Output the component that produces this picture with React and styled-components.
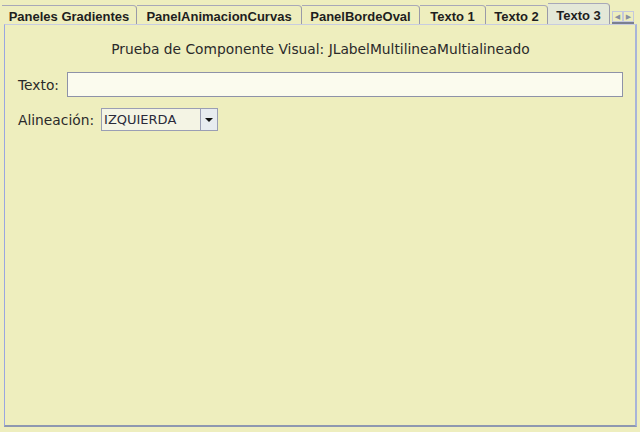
import styled, { createGlobalStyle } from 'styled-components'

const Global = createGlobalStyle`
body {
  margin: 0;
  background: #eeeebe;
}
`

const Window = styled.div`
width: 640px;
height: 432px;
box-sizing: border-box;
padding: 3px 3px 5px 4px;
display: flex;
flex-direction: column;
background: #eeeebe;
font-family: "DejaVu Sans", sans-serif;
color: #222;
`

const TabBar = styled.div`
display: flex;
align-items: flex-end;
height: 21px;
margin-left: -2px;
`

const Tab = styled.div`
box-sizing: border-box;
width: ${p => p.w}px;
height: ${p => (p.active ? 21 : 19)}px;
display: flex;
align-items: center;
justify-content: center;
padding-top: 2px;
font-family: "Liberation Sans", Arial, sans-serif;
font-weight: bold;
font-size: 13px;
color: #1e1e1e;
border-top: 1px solid #a8a8b8;
border-right: 1px solid #9a9aa8;
border-top-right-radius: 4px;
background: ${p => (p.active ? '#e4e8d8' : 'transparent')};
`

const Scroller = styled.div`
display: flex;
margin-left: 2px;
height: 11px;
border-bottom: 2px solid #7a7f90;
`

const ScrollBtn = styled.div`
width: 11px;
height: 11px;
display: flex;
align-items: center;
justify-content: center;
border: 1px solid #c4c8dc;
box-sizing: border-box;
font-size: 7px;
color: #8890a0;
`

const Panel = styled.div`
flex: 1;
border-left: 1px solid #9aa6e0;
border-right: 2px solid #a8b4d8;
border-bottom: 2px solid #8e98b0;
border-top: 1px solid #c8cce0;
display: flex;
flex-direction: column;
padding: 0 12px 0 13px;
`

const Title = styled.div`
text-align: center;
font-size: 13.8px;
margin-top: 15px;
height: 18px;
line-height: 18px;
color: #2a2a2a;
`

const Row = styled.div`
display: flex;
align-items: center;
gap: ${p => p.gap}px;
height: ${p => p.h}px;
margin-top: ${p => p.top}px;
`

const Label = styled.span`
font-size: 13.8px;
color: #2a2a2a;
`

const Field = styled.div`
flex: 1;
height: 25px;
box-sizing: border-box;
border: 1px solid #8e92a8;
background: #fbfbee;
`

const Combo = styled.div`
width: 117px;
height: 23px;
box-sizing: border-box;
border: 1px solid #9a9eb4;
background: #f4f4e4;
display: flex;
`

const ComboText = styled.div`
flex: 1;
font-size: 13px;
padding-left: 2px;
display: flex;
align-items: center;
color: #2a2a3a;
font-family: "DejaVu Sans", sans-serif;
`

const ComboBtn = styled.div`
width: 16px;
border-left: 1px solid #9a9eb4;
display: flex;
align-items: center;
justify-content: center;
background: #e8ecf0;
`

const tabs = [
  ['Paneles Gradientes', 135],
  ['PanelAnimacionCurvas', 165],
  ['PanelBordeOval', 118],
  ['Texto 1', 66],
  ['Texto 2', 62],
  ['Texto 3', 62, true],
]

export default function App() {
  return (
    <>
      <Global />
      <Window>
        <TabBar>
          {tabs.map(([t, w, a]) => (
            <Tab key={t} w={w} active={a}>{t}</Tab>
          ))}
          <Scroller>
            <ScrollBtn>◀</ScrollBtn>
            <ScrollBtn>▶</ScrollBtn>
          </Scroller>
        </TabBar>
        <Panel>
          <Title>Prueba de Componente Visual: JLabelMultilineaMultialineado</Title>
          <Row top={14} h={25} gap={8}>
            <Label>Texto:</Label>
            <Field />
          </Row>
          <Row top={11} h={23} gap={7}>
            <Label>Alineación:</Label>
            <Combo>
              <ComboText>IZQUIERDA</ComboText>
              <ComboBtn>
                <svg width="8" height="4" viewBox="0 0 8 4">
                  <path d="M0 0h8L4 4z" fill="#111" />
                </svg>
              </ComboBtn>
            </Combo>
          </Row>
        </Panel>
      </Window>
    </>
  )
}
